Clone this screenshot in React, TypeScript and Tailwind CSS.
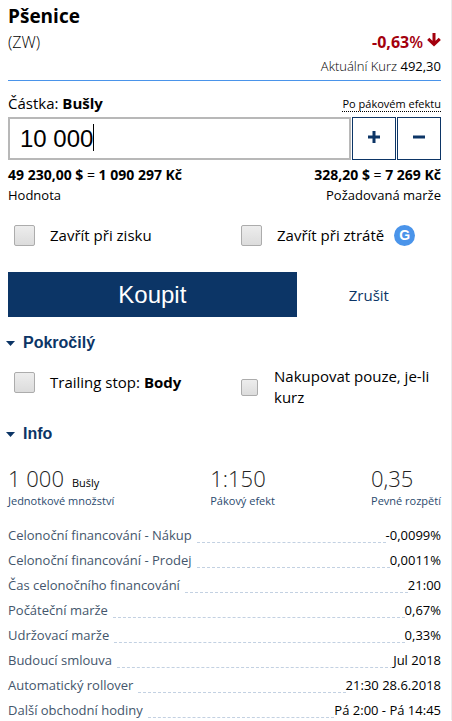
import { useState } from "react";
import type { ReactNode } from "react";

const infoRows = [
  { label: "Celonoční financování - Nákup", value: "-0,0099%" },
  { label: "Celonoční financování - Prodej", value: "0,0011%" },
  { label: "Čas celonočního financování", value: "21:00" },
  { label: "Počáteční marže", value: "0,67%" },
  { label: "Udržovací marže", value: "0,33%" },
  { label: "Budoucí smlouva", value: "Jul 2018" },
  { label: "Automatický rollover", value: "21:30 28.6.2018" },
  { label: "Další obchodní hodiny", value: "Pá 2:00 - Pá 14:45" },
];

const checkboxStyle =
  "shrink-0 appearance-none rounded-[2px] border border-[#acacac] bg-linear-to-b from-[#ededed] to-[#dcdcdc] checked:to-[#4a94ea]";

type SectionProps = {
  title: string;
  open: boolean;
  onToggle: () => void;
};

const SectionTitle = ({ title, open, onToggle }: SectionProps) => {
  return (
    <h2>
      <button
        type="button"
        aria-expanded={open}
        onClick={onToggle}
        className="-ml-1 flex h-6 items-center gap-2 pl-[2px] font-['Liberation_Sans',sans-serif] text-base font-bold text-[#0c3566]"
      >
        <svg viewBox="0 0 9 5" className="h-[5px] w-[9px]" fill="currentColor">
          <path d="M0 0h9L4.5 5z" />
        </svg>
        {title}
      </button>
    </h2>
  );
};

type StatProps = {
  value: string;
  unit?: string;
  label: string;
};

const Stat = ({ value, unit, label }: StatProps) => {
  return (
    <div className="flex flex-col-reverse">
      <dt className="text-[11px] leading-4 text-[#2c4a6e]">{label}</dt>
      <dd className="text-[22px] leading-[30px] font-light text-[#222]">
        {value}
        {unit && <span className="ml-2 text-[11px] leading-none font-normal text-black">{unit}</span>}
      </dd>
    </div>
  );
};

const StepButton = ({ label, children }: { label: string; children: ReactNode }) => {
  return (
    <button
      type="button"
      aria-label={label}
      className="grid w-11 shrink-0 place-items-center border border-[#0c3566] text-[#0c3566]"
    >
      <svg viewBox="0 0 12 12" className="mb-[3px] size-3" fill="currentColor">
        {children}
      </svg>
    </button>
  );
};

const App = () => {
  const [amount, setAmount] = useState("10 000");
  const [advancedOpen, setAdvancedOpen] = useState(true);
  const [infoOpen, setInfoOpen] = useState(true);

  return (
    <main className="border-r border-[#ebebeb] bg-white pt-1 pr-[10px] pl-2 font-['Open_Sans','Noto_Sans',sans-serif] text-[13px] leading-5 text-black">
      <header className="border-b border-[#4a94ea] pb-[3px]">
        <h1 className="text-[19px] leading-6 font-bold">Pšenice</h1>
        <div className="flex h-[27px] items-center justify-between text-base">
          <span className="font-light">(ZW)</span>
          <span className="flex items-center gap-1 font-bold text-[#a3000d]">
            <span>
              -0,63<span className="font-semibold">%</span>
            </span>
            <svg viewBox="0 0 14 14" className="mb-1 size-[14px]" fill="none" stroke="currentColor" strokeWidth="3">
              <path d="M7 0v11M1.2 5.8L7 11.4l5.8-5.6" />
            </svg>
          </span>
        </div>
        <p className="text-right leading-[22px]">
          <span className="font-light">Aktuální Kurz</span> 492,30
        </p>
      </header>

      <form onSubmit={(e) => e.preventDefault()}>
        <div className="flex items-center justify-between pt-3 pb-1">
          <label htmlFor="amount" className="text-[15px] leading-5">
            Částka: <b>Bušly</b>
          </label>
          <a href="#paka" className="mt-[2px] border-b border-dotted border-black text-[11px] leading-[15px]">
            Po pákovém efektu
          </a>
        </div>

        <div className="flex h-[43px] gap-px">
          <div className="relative min-w-0 flex-1">
            <input
              id="amount"
              type="text"
              value={amount}
              onChange={(e) => setAmount(e.target.value)}
              className="h-full w-full border-2 border-[#b8b8b8] pl-[10px] font-['Liberation_Sans',sans-serif] text-2xl caret-transparent outline-none"
            />
            {/* text cursor */}
            <span className="absolute top-[7px] left-[85px] h-[27px] w-px bg-black" />
          </div>
          <StepButton label="Zvýšit">
            <path d="M4.5 0h3v4.5H12v3H7.5V12h-3V7.5H0v-3h4.5z" />
          </StepButton>
          <StepButton label="Snížit">
            <path d="M0 4.5h12v3H0z" />
          </StepButton>
        </div>

        <div className="flex justify-between pt-[5px]">
          <p>
            <span className="block text-sm leading-5 font-bold">
              49 230,00 $ <span className="font-normal">=</span> 1 090 297 Kč
            </span>
            <span className="block">Hodnota</span>
          </p>
          <p className="text-right">
            <span className="block text-sm leading-5 font-bold">
              328,20 $ <span className="font-normal">=</span> 7 269 Kč
            </span>
            <span className="block">Požadovaná marže</span>
          </p>
        </div>

        <div className="mb-[7px] flex h-[60px] items-center text-[15px]">
          <label className="flex flex-1 items-center gap-[15px] pl-[6px]">
            <input type="checkbox" className={`size-[21px] ${checkboxStyle}`} />
            Zavřít při zisku
          </label>
          <div className="flex w-[200px] items-center gap-[10px]">
            <label className="flex items-center gap-[15px]">
              <input type="checkbox" className={`size-[21px] ${checkboxStyle}`} />
              Zavřít při ztrátě
            </label>
            <span className="grid size-[21px] place-items-center rounded-full bg-[#4a94ea] font-['Liberation_Sans',sans-serif] text-sm leading-none font-bold text-white">
              G
            </span>
          </div>
        </div>

        <div className="flex h-[45px]">
          <button
            type="submit"
            className="flex-2 bg-[#0c3566] font-['Liberation_Sans',sans-serif] text-2xl text-white"
          >
            Koupit
          </button>
          <button type="button" className="flex-1 text-[15px] text-[#0c3566]">
            Zrušit
          </button>
        </div>

        <div className="pt-[14px]">
          <SectionTitle title="Pokročilý" open={advancedOpen} onToggle={() => setAdvancedOpen(!advancedOpen)} />
        </div>
        {advancedOpen && (
          <div className="flex items-start pt-[11px] pb-[14px] text-[15px] leading-[21px]">
            <label className="flex h-8 flex-1 items-center gap-[15px] pl-[6px]">
              <input type="checkbox" className={`size-[21px] ${checkboxStyle}`} />
              <span>
                Trailing stop: <b>Body</b>
              </span>
            </label>
            <label className="flex w-[200px] items-center gap-4">
              <input type="checkbox" className={`size-[17px] ${checkboxStyle}`} />
              Nakupovat pouze, je-li kurz
            </label>
          </div>
        )}
      </form>

      <SectionTitle title="Info" open={infoOpen} onToggle={() => setInfoOpen(!infoOpen)} />
      {infoOpen && (
        <>
          <dl className="flex justify-between pt-[17px]">
            <Stat value="1 000" unit="Bušly" label="Jednotkové množství" />
            <Stat value="1:150" label="Pákový efekt" />
            <Stat value="0,35" label="Pevné rozpětí" />
          </dl>
          <dl className="flex flex-col gap-[5px] pt-4">
            {infoRows.map((row) => (
              <div key={row.label} className="flex">
                <dt className="text-[#44566c]">{row.label}</dt>
                <span className="mb-[2px] ml-[5px] flex-1 border-b border-dashed border-[#c3d1e2]" />
                <dd>{row.value}</dd>
              </div>
            ))}
          </dl>
        </>
      )}
    </main>
  );
};

export default App;
